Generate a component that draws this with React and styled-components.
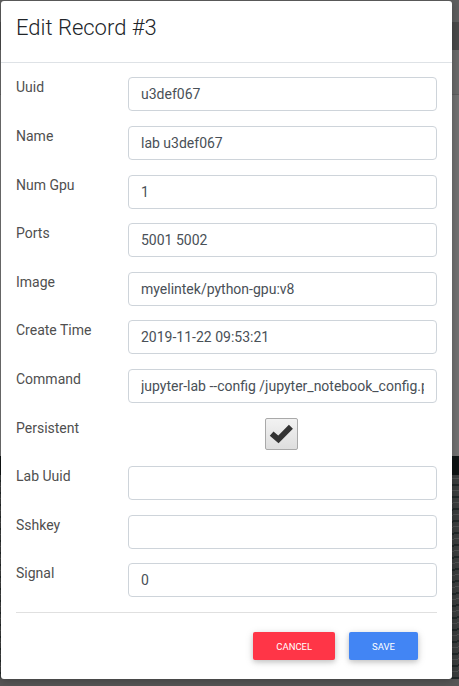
import React from 'react';
import styled, { createGlobalStyle } from 'styled-components';

const GlobalStyle = createGlobalStyle`
  html, body {
    margin: 0;
    padding: 0;
    height: 686px;
    overflow: hidden;
  }
  body {
    font-family: Roboto, "Liberation Sans", sans-serif;
    background:
      repeating-linear-gradient(
        176deg,
        transparent 0px,
        transparent 5px,
        rgba(10, 20, 20, 0.55) 5px,
        rgba(10, 20, 20, 0.55) 7px,
        transparent 7px,
        transparent 11px,
        rgba(120, 120, 120, 0.35) 11px,
        rgba(120, 120, 120, 0.35) 12px
      ) 0 475px / 100% 204px no-repeat,
      linear-gradient(
        180deg,
        #5f5f5f 0px,
        #5f5f5f 22px,
        #4a4a4a 22px,
        #4a4a4a 50px,
        #6a6a6a 50px,
        #6a6a6a 94px,
        #5e5e5e 94px,
        #5e5e5e 95px,
        #727272 95px,
        #727272 456px,
        #0f1414 456px,
        #0f1414 475px,
        #3b3e3e 475px,
        #3b3e3e 679px,
        #575757 679px
      );
  }
`;

const Modal = styled.div`
  box-sizing: border-box;
  width: 451px;
  margin: 1px 0 0 1px;
  background: #fff;
  border-radius: 3px;
  box-shadow: 0 2px 8px rgba(0, 0, 0, 0.25);
  display: flex;
  flex-direction: column;
`;

const Header = styled.div`
  padding: 14px 15px 21px;
  border-bottom: 1px solid #dee2e6;
`;

const Title = styled.h4`
  margin: 0;
  font-size: 22px;
  line-height: 1.2;
  font-weight: 300;
  color: #212529;
`;

const Body = styled.div`
  padding: 14px 15px 19px;
`;

const Form = styled.div`
  display: flex;
  flex-direction: column;
  gap: 14.6px;
`;

const Row = styled.div`
  display: grid;
  grid-template-columns: 112px 1fr;
  align-items: start;
  min-height: 34px;
`;

const Label = styled.label`
  font-size: 14px;
  line-height: 21px;
  color: #4f4f4f;
`;

const Input = styled.input`
  box-sizing: border-box;
  width: 100%;
  height: 34px;
  padding: 6px 12px;
  border: 1px solid #ced4da;
  border-radius: 4px;
  font-family: Roboto, "Liberation Sans", sans-serif;
  font-size: 14px;
  line-height: 21px;
  color: #495057;
  background: #fff;
  outline: none;
`;

const CheckBox = styled.div`
  justify-self: center;
  box-sizing: border-box;
  width: 33px;
  height: 32px;
  margin-right: 2px;
  border: 1px solid #a9a9a9;
  border-radius: 2px;
  background: linear-gradient(180deg, #f2f2f2, #dedede);
  display: flex;
  align-items: center;
  justify-content: center;
`;

const Divider = styled.hr`
  margin: 15px 0 19px;
  border: 0;
  border-top: 1px solid #e0e0e0;
`;

const Actions = styled.div`
  display: flex;
  justify-content: flex-end;
  gap: 14px;
  padding-right: 19px;
`;

const Button = styled.button`
  height: 28px;
  padding: 0 23px;
  border: 0;
  border-radius: 2px;
  background: ${({ color }) => color};
  color: #fff;
  font-family: Roboto, "Liberation Sans", sans-serif;
  font-size: 9.5px;
  text-transform: uppercase;
  box-shadow: 0 2px 5px 0 rgba(0, 0, 0, 0.16), 0 2px 10px 0 rgba(0, 0, 0, 0.12);
  cursor: pointer;
`;

const fields = [
  ['Uuid', 'u3def067'],
  ['Name', 'lab u3def067'],
  ['Num Gpu', '1'],
  ['Ports', '5001 5002'],
  ['Image', 'myelintek/python-gpu:v8'],
  ['Create Time', '2019-11-22 09:53:21'],
  ['Command', 'jupyter-lab --config /jupyter_notebook_config.py'],
];

const after = [
  ['Lab Uuid', ''],
  ['Sshkey', ''],
  ['Signal', '0'],
];

const Check = () => (
  <svg width="33" height="32" viewBox="0 0 33 32">
    <polyline
      points="6,15.5 13.2,21.8 26.5,8.2"
      fill="none"
      stroke="#333"
      strokeWidth="6"
    />
  </svg>
);

const Field = ({ label, value }) => (
  <Row>
    <Label>{label}</Label>
    <Input defaultValue={value} />
  </Row>
);

export default function App() {
  return (
    <>
      <GlobalStyle />
      <Modal>
        <Header>
          <Title>Edit Record #3</Title>
        </Header>
        <Body>
          <Form>
            {fields.map(([l, v]) => (
              <Field key={l} label={l} value={v} />
            ))}
            <Row>
              <Label>Persistent</Label>
              <CheckBox>
                <Check />
              </CheckBox>
            </Row>
            {after.map(([l, v]) => (
              <Field key={l} label={l} value={v} />
            ))}
          </Form>
          <Divider />
          <Actions>
            <Button color="#ff3547">Cancel</Button>
            <Button color="#4285f4">Save</Button>
          </Actions>
        </Body>
      </Modal>
    </>
  );
}
